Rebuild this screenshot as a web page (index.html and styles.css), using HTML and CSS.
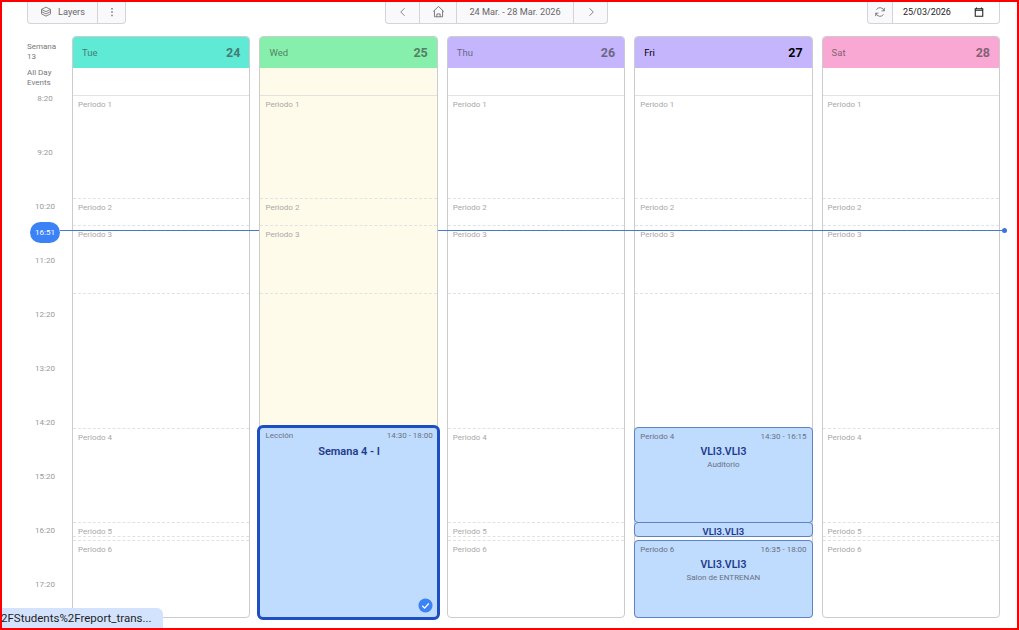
FILE: index.html
```html
<!DOCTYPE html>
<html lang="es">
<head>
    <meta charset="UTF-8">
    <meta name="viewport" content="width=device-width, initial-scale=1.0">
    <title>Calendario</title>
    <link rel="stylesheet" href="styles.css">
</head>
<body>
    <div class="app">
        <div class="toolbar">
            <div class="btn-group">
                <button class="btn btn-layers">
                    <svg class="icon" viewBox="0 0 16 16"><path d="M8 1.500 14 4.500 8 7.500 2 4.500ZM2 7.500 8 10.500 14 7.500M2 10.500 8 13.500 14 10.500M2 4.500V10.500M14 4.500V10.500"/></svg>
                    Layers
                </button>
                <button class="btn btn-menu">
                    <svg class="icon" viewBox="0 0 16 16"><path class="fill" d="M7 2.500h2v2H7zM7 7h2v2H7zM7 11.500h2v2H7z"/></svg>
                </button>
            </div>
            <div class="btn-group">
                <button class="btn btn-prev">
                    <svg class="icon" viewBox="0 0 16 16"><path d="M10 3 5 8l5 5"/></svg>
                </button>
                <button class="btn btn-home">
                    <svg class="icon icon-home" viewBox="0 0 16 16"><path d="M1.500 8 8 1.800 14.500 8M3 6.800V14.500H13V6.800M6 14.500V11H10V14.500"/></svg>
                </button>
                <div class="btn btn-range">24 Mar. - 28 Mar. 2026</div>
                <button class="btn btn-next">
                    <svg class="icon" viewBox="0 0 16 16"><path d="M6 3l5 5-5 5"/></svg>
                </button>
            </div>
            <div class="btn-group">
                <button class="btn btn-refresh">
                    <svg class="icon" viewBox="0 0 16 16"><path d="M13.500 6.500A5.700 5.700 0 0 0 3.200 4.800M2.500 9.500A5.700 5.700 0 0 0 12.800 11.200M13.800 2.500V6.500H10M2.200 13.500V9.500H6"/></svg>
                </button>
                <div class="date-field">
                    <span>25/03/2026</span>
                    <svg class="cal" viewBox="0 0 12 12"><path d="M3 .5V2M9 .5V2M1.500 2h9v9h-9zM1.500 3.800h9"/></svg>
                </div>
            </div>
        </div>

        <div class="calendar">
            <div class="times">
                <div class="side-label side-week">Semana<br>13</div>
                <div class="side-label side-allday">All Day<br>Events</div>
                <div class="time">8:20</div>
                <div class="time">9:20</div>
                <div class="time">10:20</div>
                <div class="time">11:20</div>
                <div class="time">12:20</div>
                <div class="time">13:20</div>
                <div class="time">14:20</div>
                <div class="time">15:20</div>
                <div class="time">16:20</div>
                <div class="time">17:20</div>
            </div>

            <div class="days">
                <div class="day">
                    <div class="day-head head-teal"><span>Tue</span><b>24</b></div>
                    <div class="allday"></div>
                    <div class="slot s1">Periodo 1</div>
                    <div class="slot s2">Periodo 2</div>
                    <div class="slot s3">Periodo 3</div>
                    <div class="slot s-blank"></div>
                    <div class="slot s4">Periodo 4</div>
                    <div class="slot s5">Periodo 5</div>
                    <div class="slot s-gap"></div>
                    <div class="slot s6">Periodo 6</div>
                </div>

                <div class="day day-today">
                    <div class="day-head head-green"><span>Wed</span><b>25</b></div>
                    <div class="allday"></div>
                    <div class="day-body">
                        <div class="slot s1">Periodo 1</div>
                        <div class="slot s2">Periodo 2</div>
                        <div class="slot s3">Periodo 3</div>
                        <div class="slot s-blank"></div>
                        <div class="lesson">
                            <div class="event-top"><span>Lección</span><span>14:30 - 18:00</span></div>
                            <div class="event-title">Semana 4 - I</div>
                            <svg class="check" viewBox="0 0 16 16"><circle cx="8" cy="8" r="7.500"/><path d="M4.500 8.300 7 10.800 11.500 5.800"/></svg>
                        </div>
                    </div>
                </div>

                <div class="day">
                    <div class="day-head head-violet"><span>Thu</span><b>26</b></div>
                    <div class="allday"></div>
                    <div class="slot s1">Periodo 1</div>
                    <div class="slot s2">Periodo 2</div>
                    <div class="slot s3">Periodo 3</div>
                    <div class="slot s-blank"></div>
                    <div class="slot s4">Periodo 4</div>
                    <div class="slot s5">Periodo 5</div>
                    <div class="slot s-gap"></div>
                    <div class="slot s6">Periodo 6</div>
                </div>

                <div class="day">
                    <div class="day-head head-violet head-active"><span>Fri</span><b>27</b></div>
                    <div class="allday"></div>
                    <div class="slot s1">Periodo 1</div>
                    <div class="slot s2">Periodo 2</div>
                    <div class="slot s3">Periodo 3</div>
                    <div class="slot s-blank"></div>
                    <div class="slot s4 slot-event">
                        <div class="event event-first">
                            <div class="event-top"><span>Periodo 4</span><span>14:30 - 16:15</span></div>
                            <div class="event-title">VLI3.VLI3</div>
                            <div class="event-room">Auditorio</div>
                        </div>
                    </div>
                    <div class="slot s5 slot-event">
                        <div class="event event-small">
                            <div class="event-title">VLI3.VLI3</div>
                        </div>
                    </div>
                    <div class="slot s-gap"></div>
                    <div class="slot s6 slot-event">
                        <div class="event">
                            <div class="event-top"><span>Periodo 6</span><span>16:35 - 18:00</span></div>
                            <div class="event-title">VLI3.VLI3</div>
                            <div class="event-room">Salon de ENTRENAN</div>
                        </div>
                    </div>
                </div>

                <div class="day">
                    <div class="day-head head-pink"><span>Sat</span><b>28</b></div>
                    <div class="allday"></div>
                    <div class="slot s1">Periodo 1</div>
                    <div class="slot s2">Periodo 2</div>
                    <div class="slot s3">Periodo 3</div>
                    <div class="slot s-blank"></div>
                    <div class="slot s4">Periodo 4</div>
                    <div class="slot s5">Periodo 5</div>
                    <div class="slot s-gap"></div>
                    <div class="slot s6">Periodo 6</div>
                </div>
            </div>
        </div>

        <div class="now-line"></div>
        <div class="now-pill">16:51</div>
        <div class="status-bubble">2FStudents%2Freport_trans...</div>
        <div class="frame"></div>
    </div>
</body>
</html>
```

FILE: styles.css
```css
* {
    box-sizing: border-box;
}

body {
    margin: 0;
    background: #fff;
    font-family: Roboto, "Open Sans", sans-serif;
    color: #333;
}

.app {
    position: relative;
    height: 630px;
    overflow: hidden;
}

.frame {
    position: absolute;
    inset: 0;
    border: 2px solid #f00;
    z-index: 9;
    pointer-events: none;
}

.toolbar {
    display: flex;
    justify-content: space-between;
    height: 24px;
    padding: 0 19px 0 27px;
}

.btn-group {
    display: flex;
    height: 24px;
    border: 1px solid #d4d4d8;
    border-top: none;
    border-radius: 0 0 4px 4px;
    background: #f9f9fb;
}

.btn {
    display: flex;
    align-items: center;
    justify-content: center;
    gap: 6px;
    height: 100%;
    padding: 0;
    border: none;
    border-right: 1px solid #d4d4d8;
    background: none;
    font-family: inherit;
    font-size: 9.200px;
    color: #666;
}

.btn:last-child {
    border-right: none;
}

.icon {
    width: 12px;
    height: 12px;
    fill: none;
    stroke: #777;
    stroke-width: 1.200;
}

.icon .fill {
    fill: #777;
    stroke: none;
}

.icon-home {
    width: 13px;
    height: 13px;
}

.btn-layers {
    width: 70px;
}

.btn-menu {
    width: 27px;
}

.btn-prev {
    width: 34px;
}

.btn-home {
    width: 37px;
}

.btn-range {
    width: 117px;
}

.btn-next {
    width: 33px;
}

.btn-refresh {
    width: 25px;
}

.date-field {
    display: flex;
    align-items: center;
    justify-content: space-between;
    width: 106px;
    padding: 0 15px 0 10px;
    background: #fff;
    border-radius: 0 0 4px 0;
    font-size: 9px;
    color: #222;
}

.cal {
    width: 10px;
    height: 10px;
    fill: none;
    stroke: #222;
    stroke-width: 1.300;
}

.calendar {
    display: flex;
    height: 594px;
    padding: 12px 19px 12px 0;
}

.times {
    width: 72px;
    flex-shrink: 0;
    padding-left: 27px;
    font-size: 8px;
    color: #777;
}

.side-label {
    line-height: 10px;
}

.side-week {
    padding-top: 6px;
}

.side-allday {
    padding-top: 6px;
}

.time {
    width: 36px;
    height: 54px;
    padding-top: 6px;
    line-height: 10px;
    text-align: center;
    color: #999;
}

.days {
    flex: 1;
    display: grid;
    grid-template-columns: repeat(5, 1fr);
    gap: 9px;
}

.day {
    position: relative;
    display: flex;
    flex-direction: column;
    height: 582px;
    border: 1px solid #ccc;
    border-radius: 4px;
    background: #fff;
}

.day-today {
    z-index: 2;
    background: #fffbea;
}

.day-head {
    display: flex;
    align-items: center;
    justify-content: space-between;
    height: 31px;
    padding: 0 9px;
    border-radius: 3px 3px 0 0;
    font-size: 9.500px;
}

.day-head span,
.day-head b {
    opacity: 0.6;
}

.day-head b {
    font-size: 12.500px;
}

.head-teal {
    background: #5eead4;
}

.head-green {
    background: #86efac;
}

.head-violet {
    background: #c4b5fd;
}

.head-pink {
    background: #f9a8d4;
}

.head-active {
    color: #000;
}

.head-active span,
.head-active b {
    opacity: 1;
}

.allday {
    height: 27px;
    flex-shrink: 0;
}

.day-body {
    position: relative;
    flex: 1;
}

.slot {
    flex-shrink: 0;
    padding: 4px 5px 0;
    border-top: 1px dashed #e2e2e2;
    font-size: 8px;
    line-height: 10px;
    color: #a8a8a8;
}

.s1 {
    height: 103px;
    border-top: 1px solid #e2e2e2;
}

.s2 {
    height: 27px;
}

.s3 {
    height: 68px;
}

.s-blank {
    height: 135px;
}

.s4 {
    height: 94px;
}

.s5 {
    height: 14px;
}

.s-gap {
    height: 4px;
    padding: 0;
}

.s6 {
    flex: 1;
}

.slot-event {
    display: flex;
    padding: 0;
    border-top: none;
}

.event {
    flex: 1;
    margin: 0 -1px -1px;
    padding: 4px 5px 0;
    border: 1px solid #5f82c4;
    border-radius: 4px;
    background: #bfdbfe;
    overflow: hidden;
    position: relative;
}

.event-first {
    margin-top: -1px;
}

.event-top {
    display: flex;
    justify-content: space-between;
    font-size: 8px;
    line-height: 10px;
    color: #6b7280;
}

.event-title {
    margin-top: 2px;
    font-size: 10.500px;
    line-height: 15px;
    font-weight: 600;
    text-align: center;
    color: #1e3a8a;
}

.event-room {
    font-size: 8px;
    line-height: 11px;
    text-align: center;
    color: #6b7280;
}

.event-small {
    padding: 0 5px;
}

.event-small .event-title {
    margin-top: 2px;
    font-size: 9.500px;
    line-height: 13px;
}

.lesson {
    position: absolute;
    left: -3px;
    right: -3px;
    top: 330px;
    bottom: -3px;
    padding: 3px 4px 0 5px;
    border: 3px solid #1d4ec4;
    border-radius: 6px;
    background: #bfdbfe;
}

.lesson .event-title {
    margin-top: 3px;
    font-size: 11px;
}

.check {
    position: absolute;
    right: 4px;
    bottom: 4px;
    width: 15px;
    height: 15px;
}

.check circle {
    fill: #3b82f6;
}

.check path {
    fill: none;
    stroke: #fff;
    stroke-width: 1.400;
}

.now-line {
    position: absolute;
    left: 60px;
    right: 15px;
    top: 230px;
    height: 1px;
    background: #4a78c8;
    z-index: 1;
}

.now-line::after {
    content: "";
    position: absolute;
    right: -3px;
    top: -2px;
    width: 5px;
    height: 5px;
    border-radius: 50%;
    background: #3b74e0;
}

.now-pill {
    position: absolute;
    left: 30px;
    top: 222px;
    width: 30px;
    height: 21px;
    border-radius: 11px;
    background: #3b82f6;
    color: #fff;
    font-size: 8px;
    line-height: 21px;
    text-align: center;
    z-index: 2;
}

.status-bubble {
    position: absolute;
    left: 0;
    bottom: 0;
    width: 163px;
    height: 22px;
    padding-left: 1px;
    border-radius: 0 6px 0 0;
    background: #d3e3fd;
    font-size: 11.500px;
    line-height: 20px;
    color: #1f1f1f;
    white-space: nowrap;
    z-index: 3;
}
```
